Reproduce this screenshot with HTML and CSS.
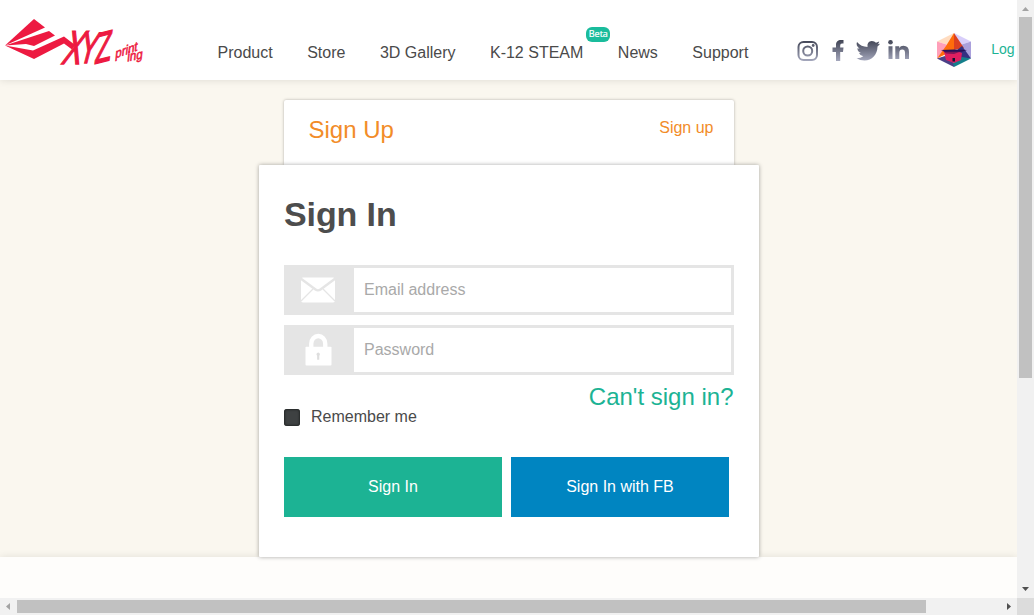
FILE: index.html
```html
<!DOCTYPE html>
<html lang="en">
<head>
<meta charset="utf-8">
<title>XYZprinting - Sign In</title>
<link rel="stylesheet" href="styles.css">
</head>
<body>
<div class="page">
  <header class="header">
    <svg class="logo" width="146" height="60" viewBox="0 10 146 60" role="img" aria-label="XYZprinting">
      <g fill="#ed1a41">
        <path d="M5 45.500 34 19 45 27.500Z"/>
        <path d="M5 45.500 49 31 55 35.500 34 46 26 44Z"/>
        <path d="M5 45.500 33 50.500 64 36.500 75 45 72 49.500 64 43.500 34 59Z"/>
      </g>
      <g class="logo-text">
        <text class="logo-xyz" transform="matrix(.64 0 -.36 1.080 60.500 64)" x="0" y="0">X</text>
        <text class="logo-xyz" transform="matrix(.6 0 -.26 1 77 63)" x="0" y="0">Y</text>
        <text class="logo-xyz" transform="matrix(.6 -.15 -.12 1 94 64)" x="0" y="0">Z</text>
        <text class="logo-small" transform="matrix(.85 -.3 -.1 1 115 58.500)" x="0" y="0">print</text>
        <text class="logo-small" transform="matrix(.85 -.17 -.1 1 127 61.500)" x="0" y="0">ing</text>
      </g>
    </svg>
    <nav class="nav">
      <a>Product</a><a>Store</a><a>3D Gallery</a><a class="nav-steam">K-12 STEAM<span class="beta">Beta</span></a><a>News</a><a>Support</a>
    </nav>
    <svg class="social" width="114" height="24" viewBox="797 38 114 24">
      <defs>
        <linearGradient id="ink" gradientUnits="userSpaceOnUse" x1="0" y1="40" x2="0" y2="61"><stop offset="0" stop-color="#3f4353"/><stop offset="1" stop-color="#a5a8bd"/></linearGradient>
      </defs>
      <g fill="none" stroke="url(#ink)" stroke-width="2">
        <rect x="798.500" y="42" width="18.500" height="18" rx="5"/>
        <circle cx="807.700" cy="51" r="4.500"/>
      </g>
      <g fill="url(#ink)">
        <circle cx="813.200" cy="45.500" r="1.400"/>
        <path d="M836 61V52H832.500V47.500H836V45C836 41.500 838 40 841 40H843.500V43.500H842Q840.200 43.500 840.200 45.500V47.500H843.500L843 52H840.200V61Z"/>
        <path d="M857 42Q861 46.800 867.500 47 866.800 41.500 871.800 41 874.500 41 876 42.800L879.200 41.600Q878.800 43.500 877.500 44.300L880 43.700Q879 45.500 877.500 46.500C877.500 54.500 872 60.500 864.500 60.500Q860 60.500 856.500 58.200 860.500 58.400 863.300 56.300 860.200 56 859 53L861 52.900Q857.500 51.800 857.400 48.200L859.500 48.700Q855.500 45.500 857 42Z"/>
        <circle cx="890.500" cy="42.300" r="2.300"/>
        <path d="M888.500 46.200H892.500V59H888.500ZM895.300 46.200H899.200V48Q900.500 45.800 903.300 45.800 909 45.800 909 52V59H905V52.800Q905 49.400 902.300 49.400 899.300 49.400 899.300 52.800V59H895.300Z"/>
      </g>
    </svg>
    <svg class="gem" width="36" height="36" viewBox="936 32 36 36">
      <path fill="#ffdcc0" d="M954 33 937 41.500 948 45Z"/>
      <path fill="#d8cefa" d="M954 33 971 41.500 960 45Z"/>
      <path fill="#ff9fb9" d="M937 41.500 948 45 937 58.500Z"/>
      <path fill="#aaa0dc" d="M971 41.500 960 45 963 50 971 58.500Z"/>
      <path fill="#ff6c0b" d="M954 33 946 46 937 58.500 954 50Z"/>
      <path fill="#dc4021" d="M954 33 964 48 954 50Z"/>
      <path fill="#343081" d="M962 46 971 58.500 961 59 956 51Z"/>
      <path fill="#4b4087" d="M937 58.500 945 56 954 63V67Z"/>
      <path fill="#147f8b" d="M971 58.500 962 57 953 63 954 67Z"/>
      <path fill="#de1e60" d="M944 52 954 50 962 53 961 60 954 63 946 60Z"/>
      <path fill="#7c1657" d="M943 51H962L954 54 946 53.500Z"/>
      <path fill="#26105a" d="M941 50 954 49.500 967 50 962 51.800H945Z"/>
      <path fill="#101030" d="M952.500 58H955V61.500H952.500Z"/>
    </svg>
    <a class="login">Log</a>
  </header>
  <main class="main">
    <section class="signup"><h2>Sign Up</h2><a>Sign up</a></section>
    <section class="card">
      <h1>Sign In</h1>
      <label class="field">
        <span class="field-icon"><svg width="34" height="26" viewBox="0 0 34 26"><rect y=".5" width="34" height="25" rx="2" fill="#fff"/><path d="M-1 1 14.500 12.500Q17 14.300 19.500 12.500L35 1" fill="none" stroke="#e5e5e5" stroke-width="2.400"/><path d="M0 24 12 12M34 24 22 12" stroke="#e5e5e5" stroke-width="1.300"/></svg></span>
        <input type="text" placeholder="Email address">
      </label>
      <label class="field">
        <span class="field-icon"><svg width="27" height="34" viewBox="0 0 28 34"><path d="M6.500 15V10.500A7.200 8 0 0 1 21 10.500V15" fill="none" stroke="#fff" stroke-width="4.500"/><rect x=".5" y="13.500" width="27" height="19.500" rx="1" fill="#fff"/><path d="M13.700 19.500A2 2 0 0 0 12.600 23V27H14.800V23A2 2 0 0 0 13.700 19.500Z" fill="#dedede"/></svg></span>
        <input type="password" placeholder="Password">
      </label>
      <div class="options">
        <label class="remember"><span class="checkbox"></span>Remember me</label>
        <a class="help">Can't sign in?</a>
      </div>
      <div class="actions"><a class="btn">Sign In</a><a class="btn btn-fb">Sign In with FB</a></div>
    </section>
  </main>
  <footer class="footer"></footer>
</div>
<div class="scroll-y">
  <svg width="17" height="17" viewBox="0 0 17 17"><path d="M5 11 8.500 7 12 11Z" fill="#a3a3a3"/></svg>
  <div class="thumb-y"></div>
  <svg class="end" width="17" height="17" viewBox="0 0 17 17"><path d="M5 6H12L8.500 10Z" fill="#505050"/></svg>
</div>
<div class="scroll-x">
  <svg width="17" height="17" viewBox="0 0 17 17"><path d="M10 5V12L6 8.500Z" fill="#a3a3a3"/></svg>
  <div class="thumb-x"></div>
  <svg class="end" width="17" height="17" viewBox="0 0 17 17"><path d="M7 5V12L11 8.500Z" fill="#505050"/></svg>
</div>
<div class="corner"></div>
</body>
</html>
```
FILE: styles.css
```css
* { box-sizing: border-box; }
body {
  margin: 0;
  width: 1034px;
  height: 615px;
  overflow: hidden;
  display: grid;
  grid-template: 598px 17px / 1017px 17px;
  font: 16px/20px "Liberation Sans", Arial, sans-serif;
  color: #4a4a4a;
}
svg { display: block; flex: none; overflow: visible; }
.page { display: flex; flex-direction: column; overflow: hidden; }
.header {
  height: 80px;
  flex: none;
  display: flex;
  align-items: flex-start;
  background: #fff;
  box-shadow: 0 0 8px rgba(0, 0, 0, .12);
  z-index: 1;
}
.logo { margin-top: 10px; }
.logo-text { fill: #ed1a41; font-family: "Liberation Sans", Arial, sans-serif; }
.logo-xyz { font-size: 44px; stroke: #ed1a41; stroke-width: 1.5px; }
.logo-small { font-size: 13.500px; stroke: #ed1a41; stroke-width: .6px; }
.nav { display: flex; gap: 34.5px; margin: 43px 0 0 71.500px; white-space: nowrap; }
.nav-steam { position: relative; }
.beta {
  position: absolute;
  top: -16px;
  right: -27px;
  width: 24px;
  height: 15px;
  border-radius: 6px;
  background: #1abc9c;
  color: #fff;
  font: 9px/14px "Open Sans", sans-serif;
  -webkit-text-stroke: .2px #fff;
  text-align: center;
}
.social { margin: 38px 0 0 auto; }
.gem { margin: 32px 0 0 25px; }
.login { margin: 39px 2.500px 0 19px; font-size: 14px; color: #1cb394; }
.main {
  height: 477px;
  flex: none;
  padding-top: 20px;
  display: flex;
  flex-direction: column;
  align-items: center;
  background: #faf7ef;
}
.signup {
  width: 450px;
  height: 65px;
  margin-right: -1px;
  padding: 16px 20.500px 0 24.500px;
  display: flex;
  justify-content: space-between;
  background: #fff;
  border-radius: 2px 2px 0 0;
  box-shadow: 0 0 3px rgba(0, 0, 0, .3);
  color: #f28c28;
}
h2 { margin: 0; font-size: 24px; line-height: 28px; font-weight: normal; }
.signup a { padding-top: 2px; }
.card {
  width: 500px;
  height: 392px;
  margin-right: -1px;
  padding: 30px 25px 0;
  background: #fff;
  border-radius: 1px;
  box-shadow: 0 0 4px rgba(0, 0, 0, .35);
  z-index: 2;
}
h1 { margin: -1px 0 31px; font-size: 34px; line-height: 40px; letter-spacing: -.1px; color: #4d4d4d; }
.field { display: flex; height: 50px; margin-bottom: 10px; background: #e5e5e5; padding: 3px; }
.field-icon { width: 67px; padding-right: 5px; display: grid; place-items: center; }
.field input { flex: 1; min-width: 0; border: 0; padding: 0 10px; background: #fff; font: inherit; }
.field input::placeholder { color: #a9a9a9; opacity: 1; }
.options { display: flex; justify-content: space-between; height: 72px; }
.remember { display: flex; gap: 11px; padding-top: 22px; }
.checkbox { width: 16px; height: 17px; margin-top: 2px; border-radius: 3px; background: #3e4142; box-shadow: inset 0 0 2px 1px #252828; }
.help { font-size: 24px; line-height: 28px; margin: -2px .5px 0 0; color: #1cb394; }
.actions { display: flex; gap: 9px; }
.btn { width: 218px; height: 60px; line-height: 60px; text-align: center; color: #fff; background: #1cb394; }
.btn-fb { background: #0085c1; }
.footer { flex: 1; background: #fefdfb; box-shadow: 0 0 8px rgba(0, 0, 0, .1); }
.scroll-y, .scroll-x { display: flex; background: #f1f1f1; }
.scroll-y { flex-direction: column; }
.end { margin-top: auto; }
.scroll-x .end { margin: 0 0 0 auto; }
.thumb-y { width: 13px; height: 361px; margin: 0 2px; background: #c1c1c1; }
.thumb-x { width: 909px; height: 13px; margin: 2px 0; background: #c1c1c1; }
.corner { background: #dcdcdc; }
```
